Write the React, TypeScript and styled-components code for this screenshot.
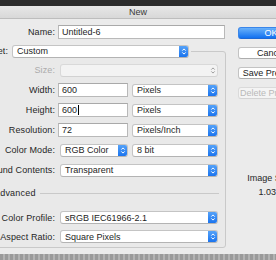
import React from 'react';
import styled, { createGlobalStyle } from 'styled-components';

const Global = createGlobalStyle`
  html, body { margin: 0; padding: 0; }
  body {
    width: 276px; height: 260px; overflow: hidden; background: #ebebeb;
    font-family: "Liberation Sans", Arial, sans-serif;
  }
`;

const Screen = styled.div`
  width: 276px; height: 260px; overflow: hidden;
  display: flex; flex-direction: column; background: #ebebeb;
`;
const TopStrip = styled.div`
  flex: none; height: 6px; background: #2b2b2b;
`;
const TitleBar = styled.div`
  flex: none; height: 13px; box-sizing: border-box;
  display: flex; align-items: center; justify-content: center;
  background: linear-gradient(#e7e7e7, #d8d8d8);
  border-bottom: 1px solid #bdbdbd;
  font-size: 9px; color: #3a3a3a;
`;
const Body = styled.div`
  flex: none; height: 235px; width: 400px; margin-left: -70px;
  box-sizing: border-box; padding-top: 5px;
  display: flex; gap: 12px;
`;
const LeftPane = styled.div`
  width: 296px; flex: none; display: flex; flex-direction: column;
`;
const RightPane = styled.div`
  width: 66px; flex: none; display: flex; flex-direction: column;
  padding-top: 3px; gap: 8px;
`;
const Row = styled.div<{ $h?: number }>`
  display: flex; align-items: center; height: ${p => p.$h ?? 20}px;
`;
const Label = styled.div<{ $w: number; $disabled?: boolean }>`
  width: ${p => p.$w}px; flex: none; display: flex; justify-content: flex-end;
  white-space: nowrap; font-size: 9px; letter-spacing: 0.1px;
  color: ${p => (p.$disabled ? '#ababab' : '#262626')};
`;
const Controls = styled.div`
  display: flex; align-items: center; gap: 4px; margin-left: 3px;
`;
const TextInput = styled.div<{ $w: number }>`
  width: ${p => p.$w}px; height: 14px; box-sizing: border-box; flex: none;
  background: #fff; border: 1px solid #b9b9b9; border-top-color: #a9a9a9;
  display: flex; align-items: center; padding-left: 3px;
  font-size: 9px; color: #1e1e1e; white-space: nowrap; overflow: hidden;
`;
const Caret = styled.span`
  display: inline-block; width: 1px; height: 10px; background: #000; margin-left: 1px;
`;
const Select = styled.div<{ $w: number; $ml?: number; $disabled?: boolean }>`
  width: ${p => p.$w}px; height: 13px; box-sizing: border-box; flex: none;
  margin-left: ${p => p.$ml ?? 0}px;
  background: ${p => (p.$disabled ? '#f3f3f3' : '#fff')};
  border: 1px solid ${p => (p.$disabled ? '#d9d9d9' : '#c4c4c4')};
  border-bottom-color: ${p => (p.$disabled ? '#d2d2d2' : '#b3b3b3')};
  border-radius: 3px;
  display: flex; align-items: center;
  font-size: 9px; color: #1e1e1e; white-space: nowrap; overflow: hidden;
`;
const SelectText = styled.span`
  flex: 1; padding-left: 4px; overflow: hidden;
`;
const Stepper = styled.div<{ $disabled?: boolean }>`
  width: 10px; height: 13px; margin: -1px -1px -1px 0; flex: none;
  border-radius: 0 3px 3px 0;
  background: ${p => (p.$disabled ? 'transparent' : 'linear-gradient(#5aa6f9, #1570ee)')};
  display: flex; align-items: center; justify-content: center;
`;
const GroupBox = styled.fieldset`
  margin: 5px 0 0; padding: 0 6px 1px 0; min-width: 0;
  width: 296px; box-sizing: border-box;
  border: 1px solid #c9c9c9; border-radius: 3px;
  background: #e9e9e9;
`;
const Legend = styled.legend`
  margin: 0; padding: 0 2px 0 0; height: 12px;
  display: flex; align-items: center; gap: 4px;
`;
const Rows = styled.div`
  display: flex; flex-direction: column; padding-top: 3px;
`;
const AdvHeader = styled.div`
  display: flex; align-items: center; height: 14px; margin-top: 6px;
  padding-left: 53px; font-size: 9px; letter-spacing: 0.2px; color: #262626; white-space: nowrap;
`;
const Disclosure = styled.span`
  width: 7px; margin-right: 3px; display: flex; justify-content: center;
`;
const Rule = styled.div`
  flex: 1; height: 1px; background: #c9c9c9; margin-left: 4px;
`;
const AdvRows = styled.div`
  display: flex; flex-direction: column; margin-top: 8px;
`;
const Button = styled.div<{ $kind?: 'primary' | 'disabled' }>`
  height: 12px; box-sizing: border-box; border-radius: 3px;
  display: flex; align-items: center; justify-content: center;
  font-size: 9px; white-space: nowrap;
  background: ${p => (p.$kind === 'primary' ? 'linear-gradient(#6ab2fa, #1171f0)' : p.$kind === 'disabled' ? '#f4f4f4' : '#fff')};
  border: 1px solid ${p => (p.$kind === 'primary' ? '#3a86ea' : p.$kind === 'disabled' ? '#dadada' : '#c3c3c3')};
  border-bottom-color: ${p => (p.$kind === 'primary' ? '#1d68d4' : p.$kind === 'disabled' ? '#d3d3d3' : '#adadad')};
  color: ${p => (p.$kind === 'primary' ? '#fff' : p.$kind === 'disabled' ? '#b9b9b9' : '#222')};
`;
const ImageInfo = styled.div`
  margin-top: 64px; text-align: center; font-size: 9px; line-height: 14px; color: #262626;
`;
const Stripe = styled.div`
  flex: none; height: 6px;
  background: repeating-linear-gradient(90deg, #9a9a9a 0 3px, #b3b3b3 3px 5px);
`;

const Arrows: React.FC<{ color: string }> = ({ color }) => (
  <svg width="6" height="9" viewBox="0 0 6 9">
    <path d="M1.3 3.6 L3 1.9 L4.7 3.6 M1.3 5.4 L3 7.1 L4.7 5.4" fill="none" stroke={color} strokeWidth="1" />
  </svg>
);

const Popup: React.FC<{ w: number; ml?: number; text?: string; disabled?: boolean }> = ({ w, ml, text, disabled }) => (
  <Select $w={w} $ml={ml} $disabled={disabled}>
    <SelectText>{text}</SelectText>
    <Stepper $disabled={disabled}>
      <Arrows color={disabled ? '#9c9c9c' : '#fff'} />
    </Stepper>
  </Select>
);

export default function App() {
  return (
    <Screen>
      <Global />
      <TopStrip />
      <TitleBar>New</TitleBar>
      <Body>
        <LeftPane>
          <Row $h={16}>
            <Label $w={125}>Name:</Label>
            <Controls>
              <TextInput $w={167}>Untitled-6</TextInput>
            </Controls>
          </Row>
          <GroupBox>
            <Legend>
              <Label $w={77}>Preset:</Label>
              <Popup w={177} text="Custom" />
            </Legend>
            <Rows>
              <Row>
                <Label $w={124} $disabled>Size:</Label>
                <Controls>
                  <Popup w={158} ml={2} disabled />
                </Controls>
              </Row>
              <Row>
                <Label $w={124}>Width:</Label>
                <Controls>
                  <TextInput $w={70}>600</TextInput>
                  <Popup w={86} text="Pixels" />
                </Controls>
              </Row>
              <Row>
                <Label $w={124}>Height:</Label>
                <Controls>
                  <TextInput $w={70}>600<Caret /></TextInput>
                  <Popup w={86} text="Pixels" />
                </Controls>
              </Row>
              <Row>
                <Label $w={124}>Resolution:</Label>
                <Controls>
                  <TextInput $w={70}>72</TextInput>
                  <Popup w={86} text="Pixels/Inch" />
                </Controls>
              </Row>
              <Row>
                <Label $w={124}>Color Mode:</Label>
                <Controls>
                  <Popup w={68} ml={2} text="RGB Color" />
                  <Popup w={86} text="8 bit" />
                </Controls>
              </Row>
              <Row>
                <Label $w={124}>Background Contents:</Label>
                <Controls>
                  <Popup w={158} ml={2} text="Transparent" />
                </Controls>
              </Row>
            </Rows>
            <AdvHeader>
              <Disclosure>
                <svg width="7" height="6" viewBox="0 0 7 6"><path d="M0.5 0.5 L6.5 0.5 L3.5 5.5 Z" fill="#6b6b6b" /></svg>
              </Disclosure>
              Advanced
              <Rule />
            </AdvHeader>
            <AdvRows>
              <Row $h={19}>
                <Label $w={124}>Color Profile:</Label>
                <Controls>
                  <Popup w={158} ml={2} text="sRGB IEC61966-2.1" />
                </Controls>
              </Row>
              <Row $h={19}>
                <Label $w={124}>Pixel Aspect Ratio:</Label>
                <Controls>
                  <Popup w={158} ml={2} text="Square Pixels" />
                </Controls>
              </Row>
            </AdvRows>
          </GroupBox>
        </LeftPane>
        <RightPane>
          <Button $kind="primary">OK</Button>
          <Button>Cancel</Button>
          <Button>Save Preset...</Button>
          <Button $kind="disabled">Delete Preset...</Button>
          <ImageInfo>
            <div>Image Size:</div>
            <div>1.03M</div>
          </ImageInfo>
        </RightPane>
      </Body>
      <Stripe />
    </Screen>
  );
}
